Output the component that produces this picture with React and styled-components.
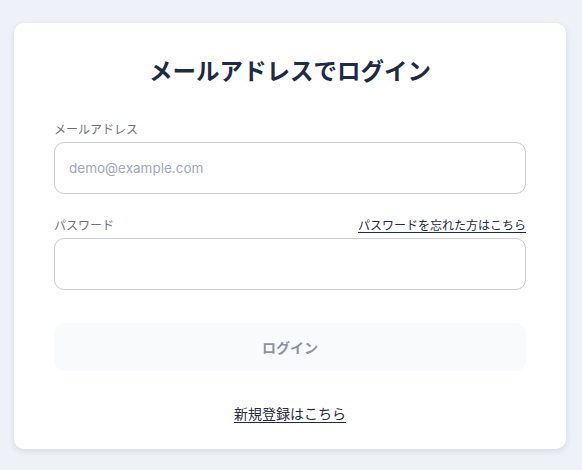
import React from 'react'
import styled, { createGlobalStyle } from 'styled-components'

const GlobalStyle = createGlobalStyle`
  html, body {
    margin: 0;
    padding: 0;
    background: #eef1f7;
    font-family: Inter, "Noto Sans CJK JP", sans-serif;
  }
`

const Page = styled.div`
  min-height: 470px;
  box-sizing: border-box;
  padding: 23px 16px 0 14px;
`

const Card = styled.form`
  width: 552px;
  box-sizing: border-box;
  background: #ffffff;
  border-radius: 10px;
  box-shadow: 0 2px 6px rgba(30, 42, 74, 0.12);
  padding: 33px 40px 25px;
  display: flex;
  flex-direction: column;
`

const Title = styled.h1`
  margin: 0;
  text-align: center;
  font-size: 23.5px;
  line-height: 32px;
  font-weight: 700;
  color: #1f2a44;
`

const Field = styled.div`
  display: flex;
  flex-direction: column;
  gap: 5px;
  margin-top: ${props => props.first ? '31px' : '21px'};
`

const LabelRow = styled.div`
  display: flex;
  justify-content: space-between;
  align-items: center;
  height: 18px;
`

const Label = styled.label`
  font-size: 12px;
  color: #6b7280;
`

const SmallLink = styled.a`
  font-size: 12px;
  color: #1f2a44;
  text-decoration: underline;
  text-underline-offset: 2px;
  cursor: pointer;
`

const Input = styled.input`
  height: 52px;
  box-sizing: border-box;
  border: 1px solid #cbcdd1;
  border-radius: 10px;
  padding: 0 14px;
  font-family: inherit;
  font-size: 13.5px;
  color: #1f2a44;
  caret-color: #1f2a44;
  outline: none;
  &::placeholder {
    color: #a3a8b2;
  }
`

const SubmitButton = styled.button`
  margin-top: 33px;
  height: 48px;
  border: none;
  border-radius: 10px;
  background: #f9fafb;
  color: #8d939e;
  font-family: inherit;
  font-size: 14px;
  font-weight: 700;
  cursor: not-allowed;
`

const Footer = styled.div`
  margin-top: 32px;
  text-align: center;
  line-height: 20px;
`

const SignupLink = styled.a`
  font-size: 14px;
  color: #1f2a44;
  text-decoration: underline;
  text-underline-offset: 3px;
  cursor: pointer;
`

export default function App() {
  return (
    <Page>
      <GlobalStyle />
      <Card onSubmit={e => e.preventDefault()}>
        <Title>メールアドレスでログイン</Title>
        <Field first>
          <LabelRow>
            <Label htmlFor="email">メールアドレス</Label>
          </LabelRow>
          <Input id="email" type="email" placeholder="demo@example.com" autoFocus />
        </Field>
        <Field>
          <LabelRow>
            <Label htmlFor="password">パスワード</Label>
            <SmallLink>パスワードを忘れた方はこちら</SmallLink>
          </LabelRow>
          <Input id="password" type="password" />
        </Field>
        <SubmitButton type="submit" disabled>ログイン</SubmitButton>
        <Footer>
          <SignupLink>新規登録はこちら</SignupLink>
        </Footer>
      </Card>
    </Page>
  )
}
